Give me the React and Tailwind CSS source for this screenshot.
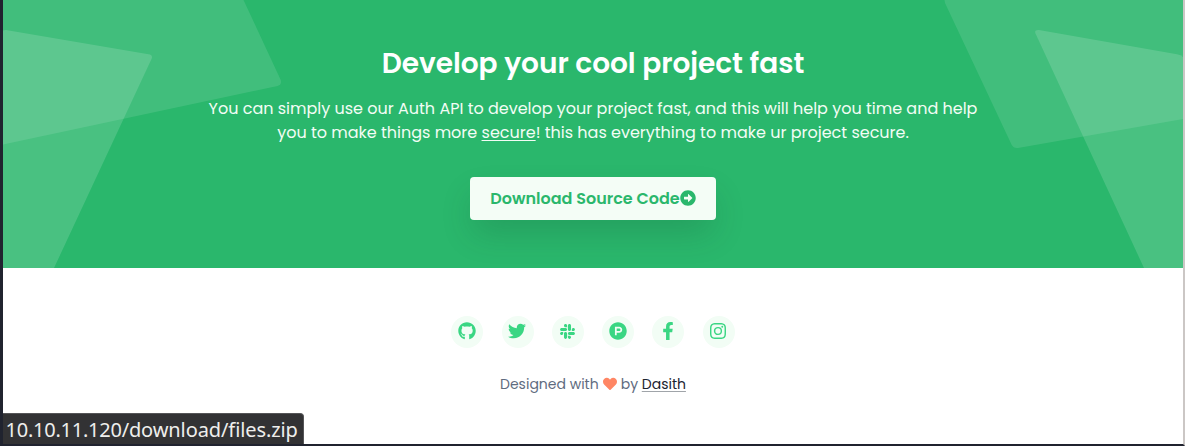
import { FaArrowAltCircleRight, FaGithub, FaTwitter, FaSlack, FaProductHunt, FaHeart, FaFacebookF } from "react-icons/fa";
import { BsInstagram } from "react-icons/bs";

const socials = [
  { name: "GitHub", Icon: FaGithub, size: "size-[18px]" },
  { name: "Twitter", Icon: FaTwitter, size: "size-[18px]" },
  { name: "Slack", Icon: FaSlack, size: "size-[17px]" },
  { name: "Product Hunt", Icon: FaProductHunt, size: "size-[18px]" },
  { name: "Facebook", Icon: FaFacebookF, size: "size-[18px]" },
  { name: "Instagram", Icon: BsInstagram, size: "size-4" },
];

function Shapes() {
  return (
    <svg className="absolute inset-0 h-full w-full" viewBox="0 0 1180 268" preserveAspectRatio="none" fill="#fff" aria-hidden="true">
      <path fillOpacity=".11" d="M0 0H240.500L277.500 79.500Q279.500 84.500 274.500 86L0 144.500Z" />
      <path fillOpacity=".15" d="M0 30.500L3 30L147 54.500Q150 55.500 148.500 59L51 268H0Z" />
      <path fillOpacity=".11" d="M1180 0H941.500L942 3L1008.500 144.500Q1010.500 148.500 1015 148L1180 119Z" />
      <path fillOpacity=".15" d="M1180 57Q1178 55 1174 54.200L1036 30Q1031 29.500 1032.500 33.500L1141 268H1180Z" />
    </svg>
  );
}

export default function App() {
  return (
    <div className="relative flex h-[446px] w-[1185px] flex-col overflow-hidden border-r-2 border-b-2 border-l-[3px] border-r-[#cbc7c5] border-b-[#20232f] border-l-[#20232f] bg-white font-['Poppins',Inter,sans-serif]">
      <section className="relative h-[268px] shrink-0 bg-[#2ab76c]">
        <Shapes />
        <div className="relative flex flex-col items-center pt-[43px] text-center">
          <h2 className="text-[28px] leading-[42px] font-semibold tracking-[-0.03px] whitespace-nowrap text-white"><span>Develop your cool project fast</span></h2>
          <p className="mt-3 text-base leading-6 whitespace-nowrap text-[#f2fdf5]">
            <span>You can simply use our Auth API to develop your project fast, and this will help you time and help</span>
            <br />
            <span>you to make things more <a className="underline underline-offset-2">secure</a>! this has everything to make ur project secure.</span>
          </p>
          <button className="mt-8 flex h-[43px] w-[246px] items-center justify-center rounded bg-[#f4fdf6] text-base font-semibold whitespace-nowrap text-[#2ab76c] shadow-[0_16px_32px_-4px_rgba(20,70,45,0.22)]">
            <span>Download Source Code</span>
            <FaArrowAltCircleRight className="mb-px size-4 shrink-0" />
          </button>
        </div>
      </section>
      <footer className="flex flex-col items-center pt-12">
        <div className="flex gap-[18.300px]">
          {socials.map(({ name, Icon, size }) => (
            <a key={name} aria-label={name} className="flex size-8 items-center justify-center rounded-full bg-[#f2fdf5] pr-px pb-[2px] text-[#3ad683]">
              <Icon className={size} />
            </a>
          ))}
        </div>
        <p className="mt-[25px] flex items-center text-sm leading-[22px] whitespace-nowrap text-[#5f6c7f]">
          <span>Designed with</span>
          <FaHeart className="mx-1 size-[14px] text-[#ff8664]" />
          <span>by&nbsp;</span>
          <a className="text-[#1b2430] underline decoration-[#a0a4a9] underline-offset-2">Dasith</a>
        </p>
      </footer>
      <div className="absolute bottom-0 left-0 flex h-[31px] w-[301px] items-center rounded-tr-[4px] border-t border-r border-[#555557] bg-[#323234] pt-[2px] pl-[2.500px] font-['Noto_Sans',sans-serif] text-[20px] leading-[30px] whitespace-nowrap text-[#eeeeec]">
        <span>
          <span className="tracking-[-0.24px]">10.10.11.120/</span>
          <span className="tracking-[-0.09px]">download/files.zip</span>
        </span>
      </div>
    </div>
  );
}
